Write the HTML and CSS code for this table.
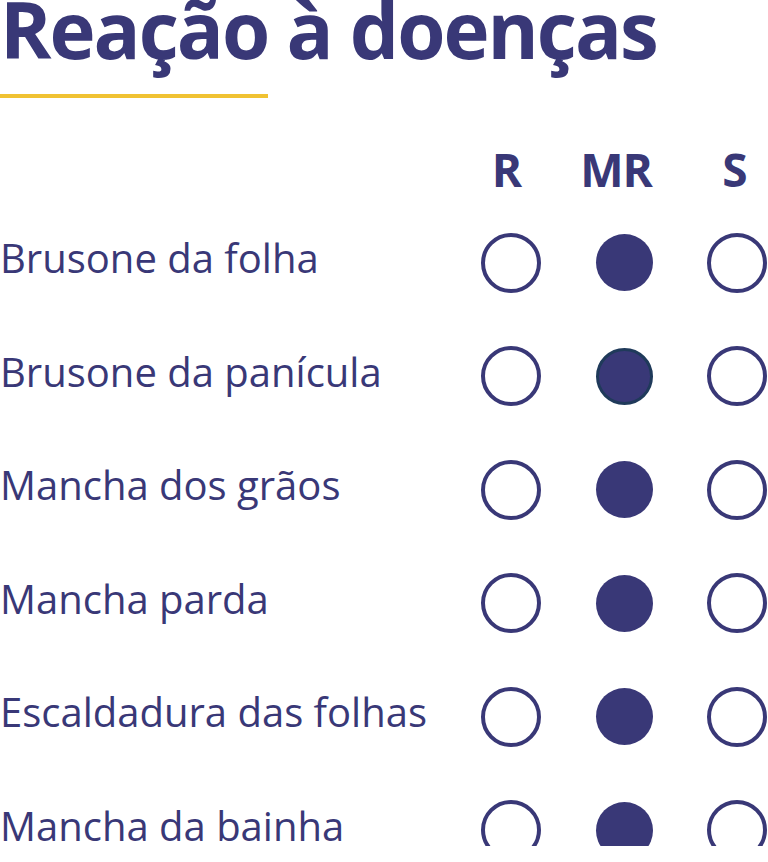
FILE: index.html
```html
<!DOCTYPE html>
<html lang="pt">
<head>
<meta charset="utf-8">
<link rel="stylesheet" href="styles.css">
</head>
<body>
<main class="card">
  <h1 class="title">Reação à doenças</h1>
  <div class="rule"></div>
  <div class="table">
    <div class="label"></div>
    <div class="head h-r">R</div>
    <div class="head h-mr">MR</div>
    <div class="head h-s">S</div>

    <div class="label">Brusone da folha</div>
    <div class="cell"><span class="dot"></span></div>
    <div class="cell"><span class="dot on"></span></div>
    <div class="cell"><span class="dot"></span></div>

    <div class="label">Brusone da panícula</div>
    <div class="cell"><span class="dot"></span></div>
    <div class="cell"><span class="dot on edge"></span></div>
    <div class="cell"><span class="dot"></span></div>

    <div class="label">Mancha dos grãos</div>
    <div class="cell"><span class="dot"></span></div>
    <div class="cell"><span class="dot on"></span></div>
    <div class="cell"><span class="dot"></span></div>

    <div class="label">Mancha parda</div>
    <div class="cell"><span class="dot"></span></div>
    <div class="cell"><span class="dot on"></span></div>
    <div class="cell"><span class="dot"></span></div>

    <div class="label">Escaldadura das folhas</div>
    <div class="cell"><span class="dot"></span></div>
    <div class="cell"><span class="dot on"></span></div>
    <div class="cell"><span class="dot"></span></div>

    <div class="label">Mancha da bainha</div>
    <div class="cell"><span class="dot"></span></div>
    <div class="cell"><span class="dot on"></span></div>
    <div class="cell"><span class="dot"></span></div>
  </div>
</main>
</body>
</html>
```
FILE: styles.css
```css
html, body {
  margin: 0;
  padding: 0;
  background: #ffffff;
}
body {
  font-family: "Open Sans", "Noto Sans", sans-serif;
  color: #393877;
  overflow: hidden;
}
.card {
  width: 768px;
  height: 862px;
}
.title {
  margin: 0;
  margin-top: -16px;
  font-size: 78px;
  line-height: 1;
  font-weight: 700;
  letter-spacing: -2px;
  padding-top: 6px;
  white-space: nowrap;
}
.rule {
  width: 268px;
  height: 4px;
  background: #f0c232;
  margin-top: 26px;
}
.table {
  display: grid;
  grid-template-columns: 1fr 62px 62px 62px;
  grid-template-rows: 19px;
  grid-auto-rows: 60px;
  column-gap: 51px;
  row-gap: 53.5px;
  align-items: center;
  margin-top: 62px;
}
.label {
  font-size: 40px;
  white-space: nowrap;
  padding-bottom: 10px;
}
.head {
  display: flex;
  justify-content: center;
  font-size: 46px;
  line-height: 19px;
  font-weight: 700;
  white-space: nowrap;
}
.h-r { margin-right: 8px; }
.h-mr { margin-right: 16px; letter-spacing: -1px; }
.h-s { margin-right: 4px; }
.cell {
  display: flex;
  justify-content: center;
  align-items: center;
}
.dot {
  width: 60px;
  height: 60px;
  border-radius: 50%;
  border: 4px solid #393877;
  box-sizing: border-box;
}
.dot.on {
  width: 57px;
  height: 57px;
  background: #393877;
  border: none;
}
.dot.on.edge {
  border: 3px solid #1f3a5a;
}
```
